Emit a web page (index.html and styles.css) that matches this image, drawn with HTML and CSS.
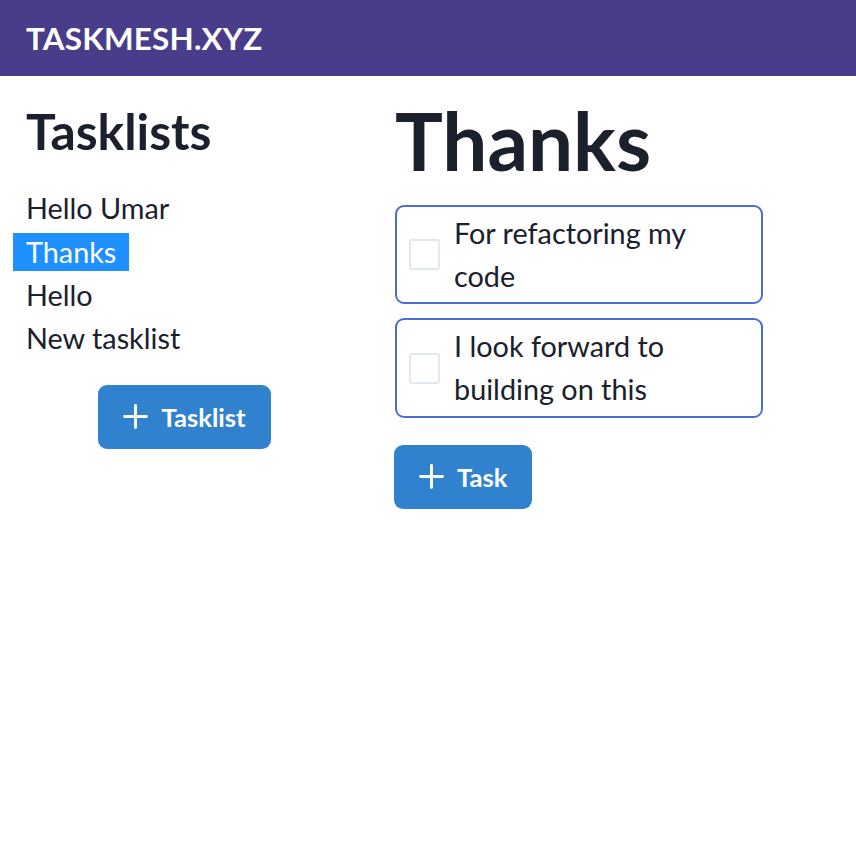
FILE: index.html
```html
<!DOCTYPE html>
<html lang="en">
<head>
<meta charset="utf-8">
<title>Taskmesh</title>
<link rel="stylesheet" href="styles.css">
</head>
<body>
<header class="topbar">
  <div class="brand">TASKMESH.XYZ</div>
</header>
<main class="main">
  <section class="sidebar">
    <h2 class="side-title">Tasklists</h2>
    <ul class="lists">
      <li class="list-row"><span class="list-item">Hello Umar</span></li>
      <li class="list-row"><span class="list-item selected">Thanks</span></li>
      <li class="list-row"><span class="list-item">Hello</span></li>
      <li class="list-row"><span class="list-item">New tasklist</span></li>
    </ul>
    <div class="side-actions">
      <button class="btn">
        <svg class="plus" viewBox="0 0 24 24" width="25" height="25"><path d="M12 1.5v21M1.5 12h21" stroke="#fff" stroke-width="2.8" stroke-linecap="round" fill="none"/></svg>
        <span>Tasklist</span>
      </button>
    </div>
  </section>
  <section class="content">
    <h1 class="page-title">Thanks</h1>
    <div class="tasks">
      <label class="task">
        <span class="check"></span>
        <span class="task-text">For refactoring my code</span>
      </label>
      <label class="task">
        <span class="check"></span>
        <span class="task-text">I look forward to building on this</span>
      </label>
    </div>
    <button class="btn">
      <svg class="plus" viewBox="0 0 24 24" width="25" height="25"><path d="M12 1.5v21M1.5 12h21" stroke="#fff" stroke-width="2.8" stroke-linecap="round" fill="none"/></svg>
      <span>Task</span>
    </button>
  </section>
</main>
</body>
</html>
```

FILE: styles.css
```css
* { box-sizing: border-box; }
html, body { margin: 0; padding: 0; background: #fff; }
body {
  font-family: Lato, "Open Sans", sans-serif;
  color: #1a202c;
  width: 856px;
  height: 856px;
  overflow: hidden;
}
.topbar {
  height: 76px;
  background: #483d8b;
  display: flex;
  align-items: center;
  padding: 2px 26px 0;
}
.brand {
  color: #fff;
  font-weight: 700;
  font-size: 31.4px;
  letter-spacing: 0.2px;
  line-height: 1.2;
}
.main {
  display: flex;
  align-items: flex-start;
  padding: 0 13px;
  gap: 39px;
}
.sidebar {
  width: 343px;
  padding-top: 26px;
  display: flex;
  flex-direction: column;
}
.side-title {
  margin: 0;
  padding-left: 13px;
  font-size: 49.8px;
  line-height: 1.2;
  font-weight: 700;
}
.lists {
  list-style: none;
  margin: 25px 0 0;
  padding: 0;
}
.list-row {
  height: 43.2px;
  display: flex;
  align-items: center;
  font-size: 28.8px;
}
.list-item {
  line-height: 38px;
  padding: 0 13px;
}
.list-item.selected {
  background: #1e90ff;
  color: #fff;
}
.side-actions {
  display: flex;
  justify-content: center;
  margin-top: 25px;
}
.btn {
  display: inline-flex;
  align-items: center;
  gap: 13px;
  height: 64px;
  padding: 0 25px;
  border: 0;
  border-radius: 9px;
  background: #3182ce;
  color: #fff;
  font-family: Lato, "Open Sans", sans-serif;
  font-weight: 700;
  font-size: 25.6px;
  cursor: pointer;
}
.plus { display: block; flex: none; }
.content {
  padding-top: 16px;
  display: flex;
  flex-direction: column;
  align-items: flex-start;
}
.page-title {
  margin: 0;
  font-size: 80px;
  line-height: 1.2;
  font-weight: 700;
}
.tasks {
  margin-top: 17px;
  display: flex;
  flex-direction: column;
  gap: 14px;
}
.task {
  width: 368px;
  display: flex;
  align-items: center;
  gap: 14px;
  padding: 4.5px 12px;
  border: 2px solid #4a6dd6;
  border-radius: 9px;
}
.check {
  flex: none;
  width: 31px;
  height: 31px;
  border: 2px solid #e2e8f0;
  border-radius: 3px;
  background: #fff;
}
.task-text {
  font-size: 28.8px;
  line-height: 43.2px;
}
.content .btn { margin-top: 27px; margin-left: -1px; }
```
